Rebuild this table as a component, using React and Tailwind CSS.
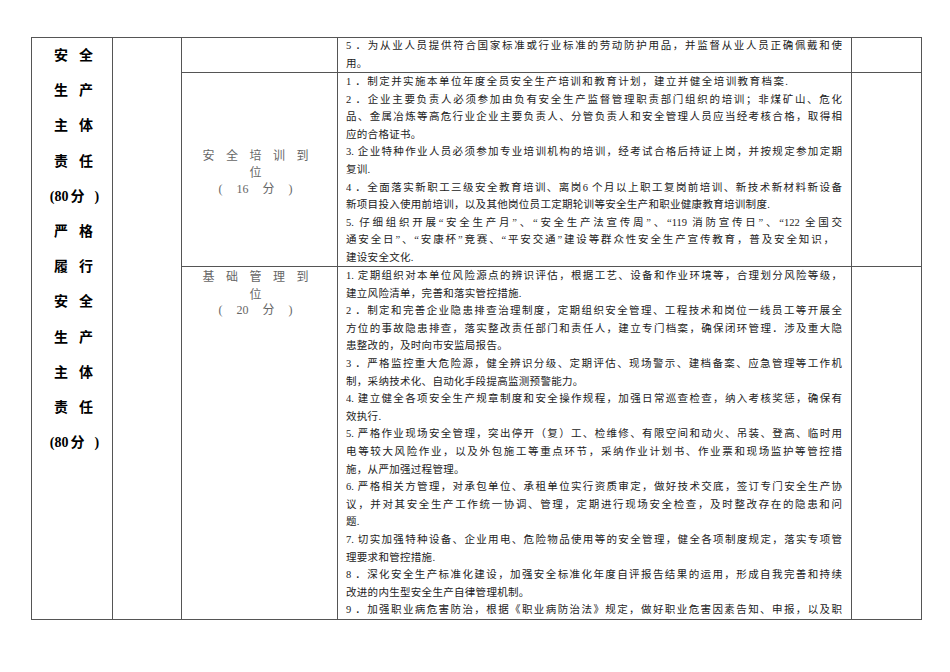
import React from "react";

const serif = "font-['Liberation_Serif','Noto_Sans_CJK_SC',serif]";

// j: full justified line, w: justified to a shorter width, else natural
const row1 = [
  { t: "5 ．为从业人员提供符合国家标准或行业标准的劳动防护用品，并监督从业人员正确佩戴和使", j: true },
  { t: "用。" },
];

const row2 = [
  { t: "1 ．制定并实施本单位年度全员安全生产培训和教育计划，建立并健全培训教育档案.", w: "w-[442px]" },
  { t: "2 ．企业主要负责人必须参加由负有安全生产监督管理职责部门组织的培训；非煤矿山、危化", j: true },
  { t: "品、金属冶炼等高危行业企业主要负责人、分管负责人和安全管理人员应当经考核合格，取得相", j: true },
  { t: "应的合格证书。" },
  { t: "3. 企业特种作业人员必须参加专业培训机构的培训，经考试合格后持证上岗，并按规定参加定期", j: true },
  { t: "复训." },
  { t: "4 ．全面落实新职工三级安全教育培训、离岗6 个月以上职工复岗前培训、新技术新材料新设备", j: true },
  { t: "新项目投入使用前培训，以及其他岗位员工定期轮训等安全生产和职业健康教育培训制度." },
  { t: "5. 仔细组织开展“安全生产月”、“安全生产法宣传周”、“119 消防宣传日”、“122 全国交", j: true },
  { t: "通安全日”、“安康杯”竞赛、“平安交通”建设等群众性安全生产宣传教育，普及安全知识，", w: "w-[488px]" },
  { t: "建设安全文化." },
];

const row3 = [
  { t: "1. 定期组织对本单位风险源点的辨识评估，根据工艺、设备和作业环境等，合理划分风险等级，", j: true },
  { t: "建立风险清单，完善和落实管控措施." },
  { t: "2 ．制定和完善企业隐患排查治理制度，定期组织安全管理、工程技术和岗位一线员工等开展全", j: true },
  { t: "方位的事故隐患排查，落实整改责任部门和责任人，建立专门档案，确保闭环管理．涉及重大隐", j: true },
  { t: "患整改的，及时向市安监局报告。" },
  { t: "3 ．严格监控重大危险源，健全辨识分级、定期评估、现场警示、建档备案、应急管理等工作机", j: true },
  { t: "制，采纳技术化、自动化手段提高监测预警能力。" },
  { t: "4. 建立健全各项安全生产规章制度和安全操作规程，加强日常巡查检查，纳入考核奖惩，确保有", j: true },
  { t: "效执行." },
  { t: "5. 严格作业现场安全管理，突出停开（复）工、检维修、有限空间和动火、吊装、登高、临时用", j: true },
  { t: "电等较大风险作业，以及外包施工等重点环节，采纳作业计划书、作业票和现场监护等管控措", j: true },
  { t: "施，从严加强过程管理。" },
  { t: "6. 严格相关方管理，对承包单位、承租单位实行资质审定，做好技术交底，签订专门安全生产协", j: true },
  { t: "议，并对其安全生产工作统一协调、管理，定期进行现场安全检查，及时整改存在的隐患和问", j: true },
  { t: "题." },
  { t: "7. 切实加强特种设备、企业用电、危险物品使用等的安全管理，健全各项制度规定，落实专项管", j: true },
  { t: "理要求和管控措施." },
  { t: "8 ．深化安全生产标准化建设，加强安全标准化年度自评报告结果的运用，形成自我完善和持续", j: true },
  { t: "改进的内生型安全生产自律管理机制。" },
  { t: "9 ．加强职业病危害防治，根据《职业病防治法》规定，做好职业危害因素告知、申报，以及职", j: true },
];

const side = [
  ["安", "全"], ["生", "产"], ["主", "体"], ["责", "任"], null,
  ["严", "格"], ["履", "行"], ["安", "全"], ["生", "产"], ["主", "体"], ["责", "任"], null,
];

function Line({ t, j, w }) {
  if (j || w) {
    return (
      <div className={`h-[17.6px] leading-[17.6px] overflow-hidden text-justify [text-align-last:justify] ${w || ""}`}>
        {t}
      </div>
    );
  }
  return <div className="h-[17.6px] leading-[17.6px] whitespace-nowrap tracking-[0.3px]">{t}</div>;
}

function Content({ lines, extra = "" }) {
  return (
    <div className={`border-r border-b border-[#555] pl-[8px] pr-[9px] text-[10.5px] text-[#222] ${serif} ${extra}`}>
      {lines.map((l, i) => (
        <Line key={i} {...l} />
      ))}
    </div>
  );
}

function Item({ name, score }) {
  return (
    <div className="flex flex-col items-center pr-[8px] text-[12px] leading-[17.6px] text-[#666] font-['Noto_Sans_CJK_SC',sans-serif]">
      <div className="w-[106px] text-justify [text-align-last:justify]">{name}</div>
      <div>位</div>
      <div className={`w-[74px] flex justify-between ${serif}`}>
        <span>(</span>
        <span>{score}</span>
        <span>分</span>
        <span>)</span>
      </div>
    </div>
  );
}

export default function App() {
  return (
    <div className="w-[950px] h-[672px] bg-white pt-[37px] pl-[31px]">
      <div className="grid w-[891px] grid-cols-[81px_69px_156px_514px_70px] grid-rows-[35px_194px_353px] border-t border-l border-[#555]">
        {/* left heading column */}
        <div className={`row-span-3 border-r border-b border-[#555] pl-[3px] text-[14px] font-bold text-black ${serif}`}>
          {side.map((s, i) =>
            s ? (
              <div key={i} className="h-[35.2px] leading-[35.2px] flex justify-center gap-[11px]">
                <span>{s[0]}</span>
                <span>{s[1]}</span>
              </div>
            ) : (
              <div key={i} className="h-[35.2px] leading-[35.2px] flex justify-center pl-[2px]">
                <span>(80</span>
                <span className="ml-[2px]">分</span>
                <span className="ml-[10px]">)</span>
              </div>
            )
          )}
        </div>
        <div className="row-span-3 border-r border-b border-[#555]" />

        {/* row 1 */}
        <div className="border-r border-b border-[#555]" />
        <Content lines={row1} extra="-mt-[1px]" />
        <div className="border-r border-b border-[#555]" />

        {/* row 2 */}
        <div className="border-r border-b border-[#555] flex items-center justify-center pt-[5px]">
          <Item name="安全培训到" score="16" />
        </div>
        <Content lines={row2} />
        <div className="border-r border-b border-[#555]" />

        {/* row 3 */}
        <div className="border-r border-b border-[#555] flex justify-center">
          <Item name="基础管理到" score="20" />
        </div>
        <Content lines={row3} />
        <div className="border-r border-b border-[#555]" />
      </div>
    </div>
  );
}
